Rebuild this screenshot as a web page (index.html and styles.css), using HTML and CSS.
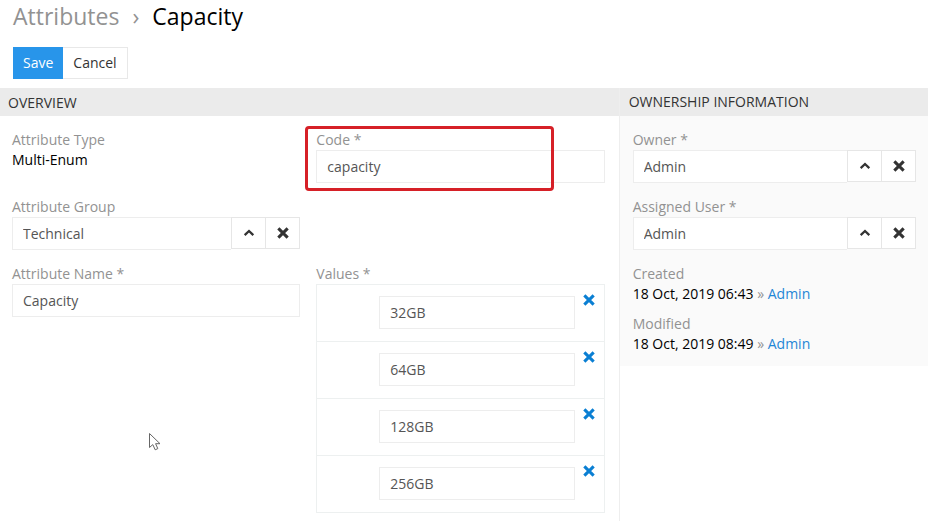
FILE: index.html
```html
<!DOCTYPE html>
<html lang="en">
<head>
<meta charset="utf-8">
<title>Capacity</title>
<meta name="viewport" content="width=device-width, initial-scale=1">
<link rel="stylesheet" href="styles.css">
</head>
<body>
<svg class="defs" aria-hidden="true">
  <symbol id="cross" viewBox="0 0 12 12"><path d="M2 2L10 10M10 2L2 10" fill="none" stroke="currentColor" stroke-width="2.6"/></symbol>
  <symbol id="up" viewBox="0 0 12 12"><path d="M2.300 7.800L6 4.300L9.700 7.800" fill="none" stroke="currentColor" stroke-width="2"/></symbol>
</svg>
<header class="page-header">
  <h1 class="title"><a class="crumb" href="#">Attributes</a><span class="separator">›</span><span>Capacity</span></h1>
  <div class="actions">
    <button class="btn primary" type="button">Save</button><button class="btn" type="button">Cancel</button>
  </div>
</header>
<div class="record">
  <main class="overview">
    <h2 class="panel-title">OVERVIEW</h2>
    <div class="fields">
      <div class="field">
        <span class="label">Attribute Type</span>
        <div class="value">Multi-Enum</div>
      </div>
      <div class="field code">
        <label class="label" for="code">Code *</label>
        <input class="control" id="code" type="text" value="capacity">
        <span class="highlight"></span>
      </div>
      <div class="field first-column">
        <label class="label" for="group">Attribute Group</label>
        <div class="input-group">
          <input class="control" id="group" type="text" value="Technical">
          <button class="addon" type="button" aria-label="Select"><svg class="icon"><use href="#up"/></svg></button>
          <button class="addon" type="button" aria-label="Clear"><svg class="icon"><use href="#cross"/></svg></button>
        </div>
      </div>
      <div class="field first-column">
        <label class="label" for="name">Attribute Name *</label>
        <input class="control" id="name" type="text" value="Capacity">
      </div>
      <div class="field">
        <span class="label" id="values-label">Values *</span>
        <ul class="values" aria-labelledby="values-label">
          <li class="item"><input class="control" type="text" value="32GB" aria-label="Value 1"><button class="remove" type="button" aria-label="Remove"><svg class="icon"><use href="#cross"/></svg></button></li>
          <li class="item"><input class="control" type="text" value="64GB" aria-label="Value 2"><button class="remove" type="button" aria-label="Remove"><svg class="icon"><use href="#cross"/></svg></button></li>
          <li class="item"><input class="control" type="text" value="128GB" aria-label="Value 3"><button class="remove" type="button" aria-label="Remove"><svg class="icon"><use href="#cross"/></svg></button></li>
          <li class="item"><input class="control" type="text" value="256GB" aria-label="Value 4"><button class="remove" type="button" aria-label="Remove"><svg class="icon"><use href="#cross"/></svg></button></li>
        </ul>
      </div>
    </div>
  </main>
  <aside class="side">
    <h2 class="panel-title side-title">OWNERSHIP INFORMATION</h2>
    <div class="side-body">
      <div class="field">
        <label class="label" for="owner">Owner *</label>
        <div class="input-group">
          <input class="control" id="owner" type="text" value="Admin">
          <button class="addon" type="button" aria-label="Select"><svg class="icon"><use href="#up"/></svg></button>
          <button class="addon" type="button" aria-label="Clear"><svg class="icon"><use href="#cross"/></svg></button>
        </div>
      </div>
      <div class="field">
        <label class="label" for="assigned">Assigned User *</label>
        <div class="input-group">
          <input class="control" id="assigned" type="text" value="Admin">
          <button class="addon" type="button" aria-label="Select"><svg class="icon"><use href="#up"/></svg></button>
          <button class="addon" type="button" aria-label="Clear"><svg class="icon"><use href="#cross"/></svg></button>
        </div>
      </div>
      <div class="stamp">
        <span class="label">Created</span>
        <div class="value">18 Oct, 2019 06:43 <span class="raquo">»</span> <a class="link" href="#">Admin</a></div>
      </div>
      <div class="stamp">
        <span class="label">Modified</span>
        <div class="value">18 Oct, 2019 08:49 <span class="raquo">»</span> <a class="link" href="#">Admin</a></div>
      </div>
    </div>
  </aside>
</div>
<svg class="pointer" viewBox="0 0 14 20" aria-hidden="true"><path d="M1.500 1.500V15.500L4.800 12.600L7.200 17.800L9.800 16.600L7.600 11.700H12Z" fill="#fff" stroke="#666" stroke-width="1"/></svg>
</body>
</html>
```
FILE: styles.css
```css
* { box-sizing: border-box; }

body {
  margin: 0;
  background: #fff;
  color: #000;
  font: 14px/20px "Open Sans", sans-serif;
}

.defs { display: none; }

.page-header { padding: 0 13px 9px; }

.title {
  margin: 0;
  font-size: 23px;
  font-weight: 400;
  line-height: 32px;
}

.crumb { color: #929292; text-decoration: none; }

.separator { margin: 0 13px; color: #929292; }

.actions { display: flex; padding-top: 15px; }

.btn {
  height: 32px;
  padding: 0 10px;
  border: 1px solid #e8e8e8;
  border-left: 0;
  background: #fff;
  color: #333;
  font: inherit;
}

.btn.primary { border: 0; background: #2895ea; color: #fff; }

.record { display: grid; grid-template-columns: 2fr 1fr; }

.panel-title {
  margin: 0;
  padding: 5px 8px 3px;
  background: #ebebeb;
  color: #333;
  font-size: 14px;
  font-weight: 400;
  line-height: 20px;
}

.fields {
  display: grid;
  grid-template-columns: 1fr 1fr;
  column-gap: 16px;
  padding: 14px 14px 0 12px;
}

.field { min-width: 0; padding-bottom: 14px; }

.fields > .field:last-child { padding-bottom: 8px; }

.first-column { grid-column: 1; }

.label { display: block; color: #929292; }

.control {
  display: block;
  width: 100%;
  min-width: 0;
  height: 33px;
  padding: 0 10px;
  border: 1px solid #ededed;
  border-radius: 0;
  background: #fff;
  color: #555;
  font: inherit;
}

.code { position: relative; }

.highlight {
  position: absolute;
  top: -4px;
  left: -11px;
  width: 249px;
  height: 65px;
  border: 3px solid #d62027;
  border-radius: 4px;
  pointer-events: none;
}

.input-group { display: flex; align-items: flex-start; }

.input-group .control { flex: 1; border-right: 0; }

.addon {
  display: grid;
  flex: none;
  place-items: center;
  width: 35px;
  height: 32px;
  padding: 0;
  border: 1px solid #e6e6e6;
  background: #fff;
  color: #333;
}

.addon + .addon { margin-left: -1px; }

.icon { display: block; width: 14px; height: 14px; }

.values {
  margin: 0;
  padding: 0;
  border: 1px solid #edf0f0;
  border-bottom: 0;
  list-style: none;
}

.item {
  display: flex;
  align-items: flex-start;
  padding: 11px 0 12px 62px;
  border-bottom: 1px solid #edf0f0;
}

.item .control { flex: 1; }

.remove {
  display: grid;
  flex: none;
  place-items: center;
  width: 29px;
  height: 14px;
  margin-top: -3px;
  padding: 0;
  border: 0;
  background: none;
  color: #0a7fd3;
}

.side { border-left: 1px solid #eee; }

.side-title { padding: 4px 9px; }

.side-body { padding: 14px 12px 2px 13px; background: #fafafa; }

.stamp { padding-bottom: 10px; }

.raquo { color: #929292; }

.link { color: #1f86d6; text-decoration: none; }

.pointer {
  position: absolute;
  top: 432px;
  left: 148px;
  width: 14px;
  height: 20px;
}
```
